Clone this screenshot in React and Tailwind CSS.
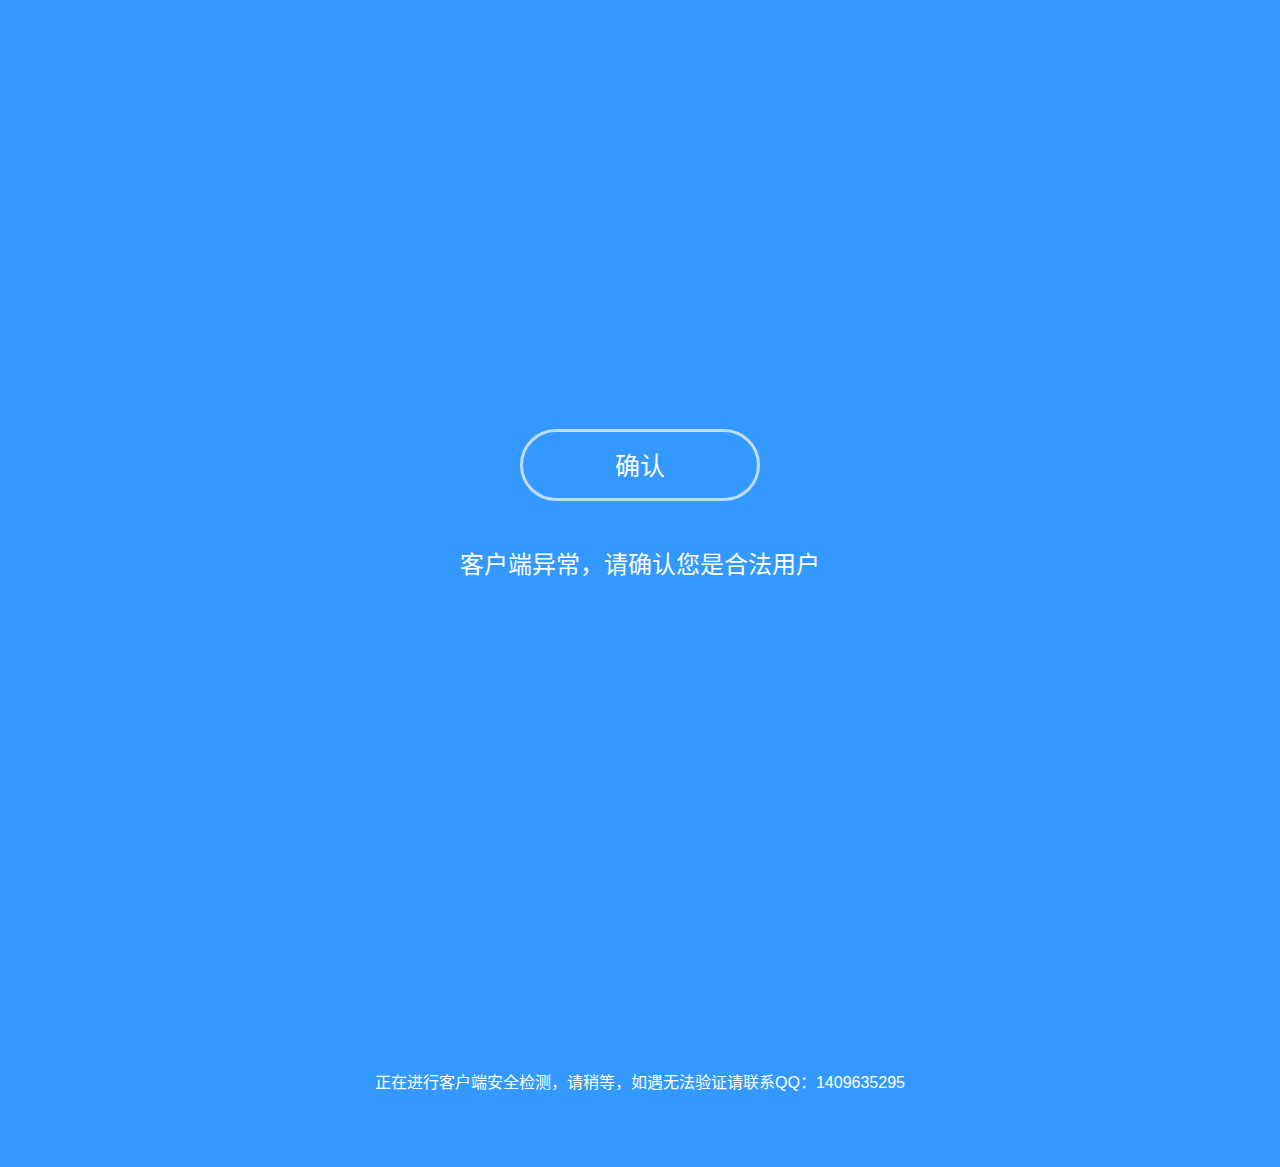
export default function App() {
  return (
    <div
      className="h-screen w-full bg-[#3399ff] flex flex-col items-center text-white"
      style={{ fontFamily: '"Liberation Sans", "Noto Sans CJK SC", sans-serif' }}
    >
      <button className="mt-[429px] w-[240px] h-[72px] pt-[4px] rounded-full border-[3px] border-[#bfdcfb] text-[25px] text-white flex items-center justify-center">
        确认
      </button>
      <p className="mt-[48px] text-[24px] leading-[32px]">客户端异常，请确认您是合法用户</p>
      <p className="mt-auto mb-[72px] text-[16px] leading-[24px]">
        正在进行客户端安全检测，请稍等，如遇无法验证请联系QQ：1409635295
      </p>
    </div>
  );
}
